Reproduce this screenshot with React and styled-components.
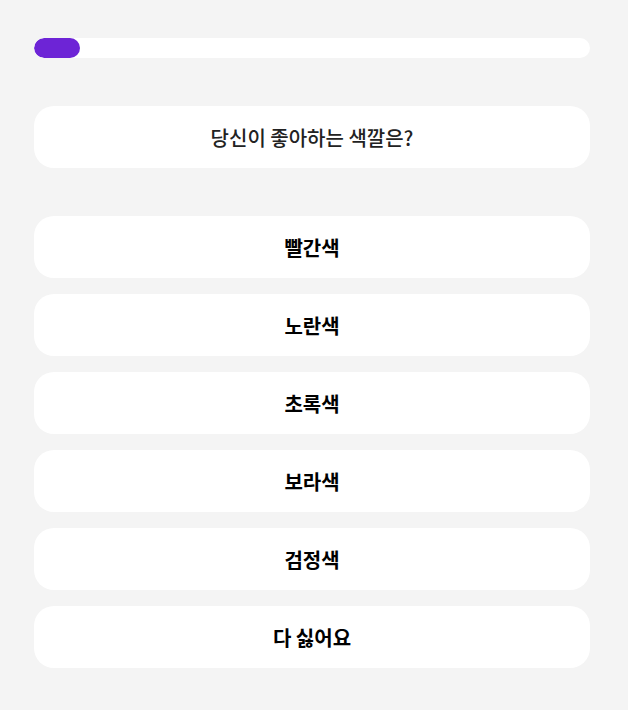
import React from "react"
import styled, { createGlobalStyle } from "styled-components"

const GlobalStyle = createGlobalStyle`
    body {
        margin: 0;
        background: #f4f4f4;
        font-family: "Noto Sans CJK KR", "Noto Sans", sans-serif;
    }
`

const Page = styled.div`
    width: 556px;
    padding: 38px 0 40px 34px;
    display: flex;
    flex-direction: column;
`

const Track = styled.div`
    height: 20px;
    background: #fff;
    border-radius: 10px;
    overflow: hidden;
`

const Fill = styled.div`
    height: 100%;
    background: #6d24d6;
    border-radius: 10px;
`

const Question = styled.div`
    margin-top: 48px;
    height: 62px;
    background: #fff;
    border-radius: 20px;
    display: flex;
    align-items: center;
    justify-content: center;
    font-size: 20px;
    font-weight: 500;
    color: #222;
`

const Options = styled.div`
    margin-top: 48px;
    display: flex;
    flex-direction: column;
    gap: 16px;
`

const Option = styled.button`
    height: 62px;
    border: none;
    background: #fff;
    border-radius: 20px;
    font-family: inherit;
    font-size: 20px;
    font-weight: 600;
    color: #000;
    cursor: pointer;
`

const choices = ["빨간색", "노란색", "초록색", "보라색", "검정색", "다 싫어요"]

const App = () => (
    <>
        <GlobalStyle />
        <Page>
            <Track>
                <Fill style={{ width: "46px" }} />
            </Track>
            <Question>당신이 좋아하는 색깔은?</Question>
            <Options>
                {choices.map(c => <Option key={c}>{c}</Option>)}
            </Options>
        </Page>
    </>
)

export default App
